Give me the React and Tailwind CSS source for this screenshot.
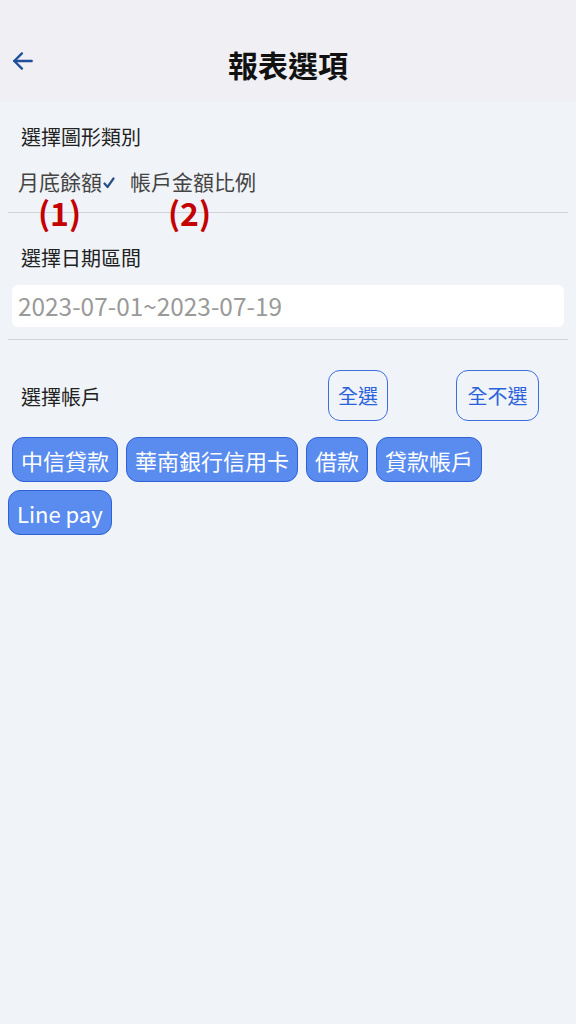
import React, { useState } from 'react';

const ACCOUNTS = ['中信貸款', '華南銀行信用卡', '借款', '貸款帳戶', 'Line pay'];

const FONT = "font-['Noto_Sans_CJK_TC','Noto_Sans',sans-serif]";

export default function App() {
  const [chart, setChart] = useState('month');
  const [selected, setSelected] = useState(ACCOUNTS);

  const toggle = (name) =>
    setSelected((s) => (s.includes(name) ? s.filter((n) => n !== name) : [...s, name]));

  return (
    <div className={`min-h-[1024px] w-full bg-[#f0f3f7] ${FONT}`}>
      {/* Header */}
      <div className="h-[102px] bg-[#efeff4] flex items-center relative">
        <button className="absolute left-[10px] top-[48px] text-[#1f4e9c]">
          <svg width="26" height="26" viewBox="0 0 24 24" fill="none" stroke="currentColor" strokeWidth="2.2" strokeLinecap="round" strokeLinejoin="round">
            <path d="M20 12H4" />
            <path d="M11 5l-7 7 7 7" />
          </svg>
        </button>
        <h1 className="flex-1 text-center text-[30px] font-bold text-[#111] pt-[26px]">報表選項</h1>
      </div>

      {/* Chart type */}
      <div className="px-[21px] pt-[20px] text-[20px] leading-[30px] text-[#222]">選擇圖形類別</div>
      <div className="relative flex items-center gap-[15px] pl-[18px] pt-[15px] pb-[17px] text-[21px] leading-[28px] text-[#444]">
        <button onClick={() => setChart('month')} className="flex items-center">
          月底餘額
          {chart === 'month' && (
            <svg width="12" height="12" viewBox="0 0 12 12" className="ml-[1px] mt-[3px] text-[#2c4f86]" fill="none" stroke="currentColor" strokeWidth="2.2" strokeLinecap="round" strokeLinejoin="round">
              <path d="M1.5 6.5l3 3.5L10.5 1.5" />
            </svg>
          )}
        </button>
        <button onClick={() => setChart('ratio')} className="flex items-center">
          帳戶金額比例
          {chart === 'ratio' && (
            <svg width="12" height="12" viewBox="0 0 12 12" className="ml-[1px] mt-[3px] text-[#2c4f86]" fill="none" stroke="currentColor" strokeWidth="2.2" strokeLinecap="round" strokeLinejoin="round">
              <path d="M1.5 6.5l3 3.5L10.5 1.5" />
            </svg>
          )}
        </button>
        <span className="absolute left-[38px] top-[44px] text-[32px] font-bold text-[#c40000] leading-none">(1)</span>
        <span className="absolute left-[168px] top-[44px] text-[32px] font-bold text-[#c40000] leading-none">(2)</span>
      </div>
      <div className="mx-[8px] h-px bg-[#d2d4d8]" />

      {/* Date range */}
      <div className="px-[21px] pt-[30px] text-[20px] leading-[30px] text-[#222]">選擇日期區間</div>
      <div className="mx-[12px] mt-[12px] h-[42px] rounded-[6px] bg-white flex items-center px-[6px] text-[24.4px] text-[#9a9a9a]">
        2023-07-01~2023-07-19
      </div>
      <div className="mx-[8px] mt-[12px] h-px bg-[#d2d4d8]" />

      {/* Accounts */}
      <div className="flex items-center pt-[30px] pb-[16px]">
        <div className="pl-[21px] w-[328px] text-[20px] leading-[30px] text-[#222] pt-[2px]">選擇帳戶</div>
        <button onClick={() => setSelected(ACCOUNTS)} className="h-[51px] w-[60px] rounded-[12px] border border-[#3d6ee0] text-[20px] text-[#2a62dc]">全選</button>
        <button onClick={() => setSelected([])} className="ml-[68px] h-[51px] w-[83px] rounded-[12px] border border-[#3d6ee0] text-[20px] text-[#2a62dc]">全不選</button>
      </div>
      <div className="flex flex-wrap gap-x-[8px] gap-y-[8px] pl-[12px] pr-[8px]">
        {ACCOUNTS.map((name, i) => (
          <button
            key={name}
            onClick={() => toggle(name)}
            className={`h-[45px] px-[8px] rounded-[12px] border border-[#2f62d6] text-[22px] leading-[30px] ${i === 4 ? '-ml-[4px]' : ''} ${selected.includes(name) ? 'bg-[#5a8cf0] text-white' : 'bg-white text-[#2a62dc]'}`}
          >
            {name}
          </button>
        ))}
      </div>
    </div>
  );
}
